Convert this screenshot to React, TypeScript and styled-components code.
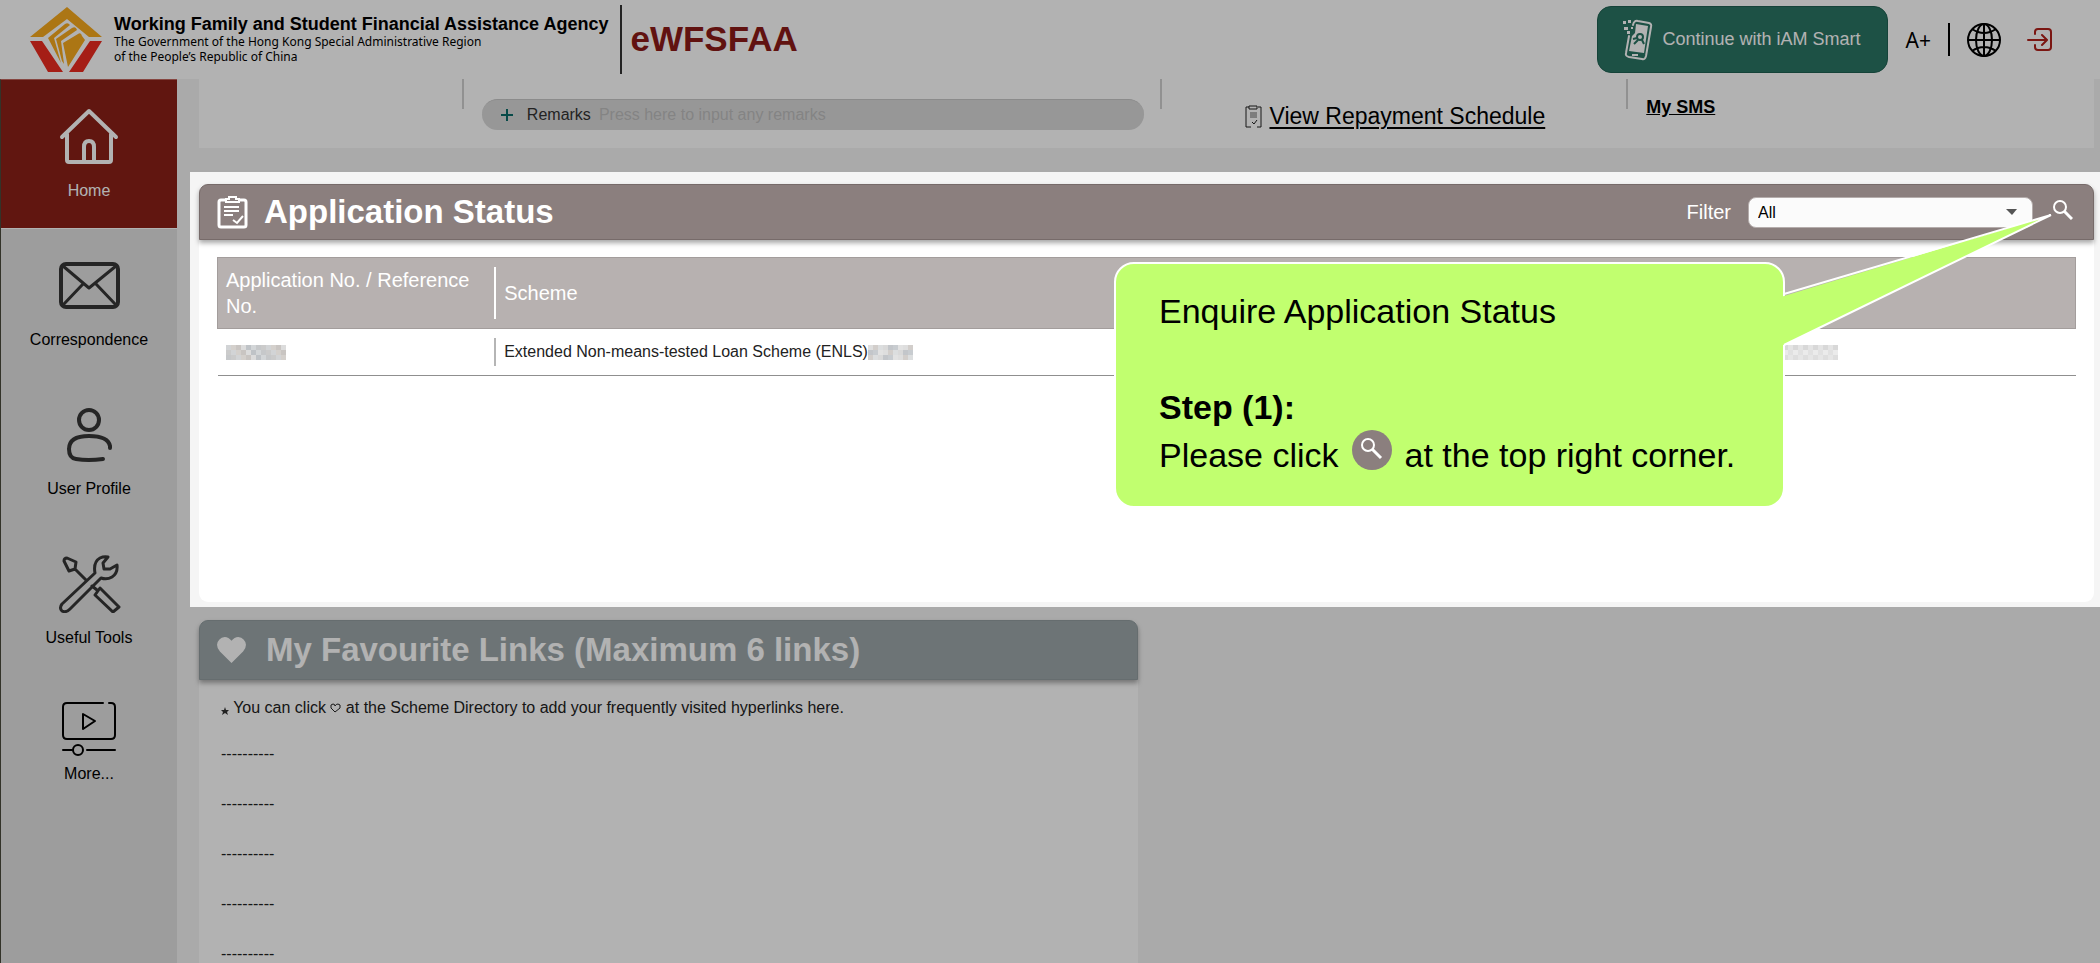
import React from "react";
import styled, { createGlobalStyle, css } from "styled-components";

const GlobalStyle = createGlobalStyle`
  *, *::before, *::after { box-sizing: border-box; }
  body { margin: 0; background: #f4f4f4; font-family: "Liberation Sans", Arial, sans-serif; color: #000; }
  h1, h2, p, ul { margin: 0; padding: 0; }
  ul { list-style: none; }
  button, select, input { font-family: inherit; }
  a { color: inherit; }
`;

/* ---------- shell ---------- */

const Shell = styled.div`
  height: 100vh;
  display: flex;
  flex-direction: column;
  overflow: hidden;
`;

const TopBar = styled.header`
  flex: none;
  height: 79px;
  display: flex;
  align-items: center;
  justify-content: space-between;
  padding: 0 48px 0 30px;
  background: #fff;
`;

const Brand = styled.div`
  display: flex;
  align-items: center;
`;

const Emblem = styled.svg`
  width: 72px;
  height: 66px;
  margin-right: 12px;
`;

const AgencyText = styled.div`
  display: flex;
  flex-direction: column;
  padding-bottom: 2px;
`;

const AgencyName = styled.strong`
  font-size: 18px;
  line-height: 20px;
`;

const AgencyLine = styled.span`
  font-family: "Noto Sans", sans-serif;
  font-size: 12px;
  line-height: 15px;
`;

const SystemName = styled.h1`
  display: flex;
  align-items: center;
  height: 69px;
  margin-left: 12px;
  padding: 0 0 2px 8px;
  border-left: 2px solid #333;
  font-size: 35px;
  color: #8b1a17;
`;

const Tools = styled.div`
  display: flex;
  align-items: center;
`;

const SmartButton = styled.button`
  display: flex;
  align-items: center;
  gap: 9px;
  height: 67px;
  padding: 0 26px 0 25px;
  border: 1px solid #1f6152;
  border-radius: 14px;
  background: #2a7463;
  color: #fff;
  font-size: 18px;
`;

const PlainButton = styled.button`
  display: flex;
  padding: 0;
  border: 0;
  background: none;
  color: inherit;
`;

const SizeButton = styled(PlainButton)`
  margin-left: 18px;
  font-family: "Noto Sans", sans-serif;
  font-size: 21px;
`;

const ToolRule = styled.span`
  width: 2px;
  height: 33px;
  margin: 0 17px;
  background: #000;
`;

const ExitButton = styled(PlainButton)`
  margin-left: 26px;
  color: #b0201a;
`;

const Body = styled.div`
  flex: 1;
  min-height: 0;
  display: flex;
`;

/* ---------- side navigation ---------- */

const Sidebar = styled.nav`
  flex: none;
  width: 177px;
  border-left: 1px solid #4a4a3c;
  border-top: 1px solid #c0655d;
  background: #e1e1e1;
`;

const NavLink = styled.a<{ $active?: boolean; $compact?: boolean }>`
  display: flex;
  flex-direction: column;
  align-items: center;
  gap: ${(p) => (p.$compact ? 5 : 15)}px;
  height: 149px;
  padding-top: ${(p) => (p.$compact ? 23 : 26)}px;
  font-size: 16px;
  line-height: 20px;
  text-decoration: none;
  color: #000;
  ${(p) =>
    p.$active &&
    css`
      background: #8b2018;
      border-bottom: 1px solid #fff;
      color: #fff;
    `}
`;

const NavIcon = styled.svg`
  width: 64px;
  height: 60px;
  fill: none;
  stroke: #363636;
  stroke-width: 4;
  stroke-linecap: round;
  stroke-linejoin: round;
`;

/* ---------- content ---------- */

const Content = styled.main`
  flex: 1;
  min-width: 0;
`;

const Summary = styled.section`
  display: grid;
  grid-template-columns: 265fr 699fr 466fr 466fr;
  height: 69px;
  margin: 0 6px 0 22px;
  background: #fff;
`;

const SummaryCell = styled.div`
  display: flex;
  align-items: flex-start;
  &:not(:last-child) {
    background: linear-gradient(#d0d0d0, #d0d0d0) right top / 2px 30px no-repeat;
  }
`;

const RemarksField = styled.label`
  flex: 1;
  display: flex;
  align-items: center;
  height: 31px;
  margin: 20px 18px 0;
  padding-left: 17px;
  border-top: 1px solid #c8c8c8;
  border-radius: 16px;
  background: #d9d9d9;
  font-size: 16px;
  color: #333;
`;

const RemarksIcon = styled.svg`
  width: 16px;
  height: 16px;
  margin-right: 12px;
`;

const RemarksInput = styled.input`
  flex: 1;
  margin-left: 8px;
  padding: 0;
  border: 0;
  outline: 0;
  background: none;
  font-size: 16px;
  &::placeholder {
    color: #bdbdbd;
    opacity: 1;
  }
`;

const RepaymentLink = styled.a`
  display: flex;
  align-items: center;
  gap: 7px;
  margin: 23px auto 0;
  font-size: 23px;
  line-height: 28px;
  text-decoration: none;
  span { text-decoration: underline; text-decoration-thickness: 2px; text-underline-offset: 3px; }
`;

const SmsLink = styled.a`
  margin: 17px 0 0 18px;
  font-size: 18px;
  font-weight: bold;
  line-height: 22px;
`;

/* The highlighted step stays bright while its spread shadow dims the rest of the page. */
const Spotlight = styled.div`
  position: relative;
  z-index: 2;
  margin: 24px 0 0 13px;
  padding: 12px 6px 5px 9px;
  background: #f5f5f5;
  box-shadow: 0 0 0 4000px rgba(0, 0, 0, 0.3);
`;

const Card = styled.section`
  border-radius: 9px;
  background: #fff;
`;

const StatusCard = styled(Card)`
  min-height: 418px;
`;

const CardHeader = styled.div<{ $tone: "mauve" | "slate" }>`
  display: flex;
  align-items: center;
  gap: ${(p) => (p.$tone === "mauve" ? 16 : 20)}px;
  height: ${(p) => (p.$tone === "mauve" ? 56 : 60)}px;
  padding: 0 20px 0 17px;
  border: 1px solid ${(p) => (p.$tone === "mauve" ? "#776b6a" : "#929da0")};
  border-radius: 9px 9px 0 0;
  background: ${(p) => (p.$tone === "mauve" ? "#8b7f7e" : "#9ca7aa")};
  box-shadow: 0 3px 5px rgba(0, 0, 0, 0.35);
  color: #fff;
`;

const CardTitle = styled.h2`
  font-size: 33px;
  line-height: 40px;
`;

const Filter = styled.div`
  display: flex;
  align-items: center;
  margin-left: auto;
`;

const FilterLabel = styled.label`
  font-size: 20px;
`;

const SelectBox = styled.div`
  display: flex;
  align-items: center;
  position: relative;
  width: 285px;
  margin: 0 20px 0 17px;
`;

const FilterSelect = styled.select`
  appearance: none;
  width: 100%;
  height: 31px;
  padding: 0 9px;
  border: 1px solid #b5adac;
  border-radius: 8px;
  background: #fbfbfb;
  font-size: 16px;
  color: #000;
`;

const Caret = styled.svg`
  position: absolute;
  right: 16px;
  width: 11px;
  height: 6px;
  pointer-events: none;
`;

const SearchButton = styled(PlainButton)`
  padding-bottom: 4px;
`;

const StatusTable = styled.table`
  width: calc(100% - 36px);
  margin: 17px 18px 0;
  table-layout: fixed;
  border-collapse: collapse;
  text-align: left;
  col:first-child { width: 15%; }
  col:last-child { width: 17%; }
  th, td { padding: 9px 0; font-weight: normal; }
  thead { background: #b7b1b0; color: #fff; font-size: 20px; line-height: 26px; border: 1px solid #a39d9c; }
  tbody { font-size: 16px; line-height: 28px; color: #222; border-bottom: 1px solid #8f8f8f; }
`;

const Cell = styled.div<{ $rule?: string }>`
  display: flex;
  align-items: center;
  padding: 0 8px;
  ${(p) => p.$rule && css`border-right: 2px solid ${p.$rule};`}
`;

const Mosaic = styled.svg`
  height: 15px;
  shape-rendering: crispEdges;
`;

/* ---------- callout ---------- */

const Callout = styled.aside`
  position: absolute;
  top: 90px;
  right: 315px;
  width: 671px;
  height: 246px;
  padding: 23px 43px;
  border: 2px solid #fff;
  border-radius: 20px;
  background: #c1ff6f;
  font-size: 34px;
  line-height: 48px;
`;

const CalloutTail = styled.svg`
  position: absolute;
  top: -52px;
  left: 665px;
  width: 272px;
  height: 136px;
`;

const StepTitle = styled.p`
  margin-top: 48px;
  font-weight: bold;
`;

const StepText = styled.p`
  display: flex;
  align-items: center;
  height: 48px;
  white-space: nowrap;
`;

const StepIcon = styled.svg`
  width: 40px;
  height: 40px;
  margin: 0 13px 10px 13px;
`;

/* ---------- favourites ---------- */

const Lower = styled.div`
  display: grid;
  grid-template-columns: 1fr 1fr;
  gap: 17px;
  margin: 13px 6px 0 22px;
`;

const FavouriteNote = styled.p`
  display: flex;
  align-items: center;
  padding: 17px 22px 0;
  font-size: 16px;
  line-height: 22px;
  color: #222;
  white-space: pre;
`;

const FavouriteList = styled.ul`
  padding: 12px 22px 0;
  font-size: 16px;
  color: #222;
`;

const FavouriteItem = styled.li`
  height: 50px;
  padding-top: 14px;
  line-height: 18px;
`;

/* ---------- drawings ---------- */

const LogoMark = () => (
  <Emblem viewBox="0 0 72 66" aria-hidden="true">
    <path d="M37 0 L72 30 H59 L37 12 L13 30 H0 Z" fill="#f6a91e" />
    <path d="M0 34 H12 L33 65 H18 Z M72 34 H60 L39 65 H53 Z" fill="#ec2c20" />
    <path d="M18 31 L35 17 Q38 15 40 18 L24 31 L31 56 Z" fill="#f6a91e" />
    <path d="M26 32 L42 21 Q46 19 47 23 L31 34 L34 57 L32 54 Z" fill="#f6a91e" />
    <path d="M33 36 L48 27 Q51 25 52 29 L55 33 L38 60 Z" fill="#f6a91e" />
  </Emblem>
);

const Phone = () => (
  <svg width="30" height="42" viewBox="0 0 30 42" aria-hidden="true">
    <g fill="none" stroke="#fff" strokeWidth="2" strokeLinejoin="round" strokeLinecap="round">
      <path d="M10 6 Q11 1 15 2 L26 4 Q29 5 28 8 L23 37 Q22 41 19 40 L6 38 Q2 37 3 34 L6 17" />
    </g>
    <path d="M13 5 L25 7 L21 34 L6 32 L9 17 L12 14 Z" fill="#fff" />
    <g fill="#fff">
      <rect x="0" y="2" width="3" height="3" />
      <rect x="5" y="1" width="3" height="3" />
      <rect x="1" y="8" width="4" height="3" />
      <rect x="4" y="12" width="3" height="3" />
      <rect x="8" y="8" width="2" height="2" />
      <rect x="9" y="35" width="6" height="2" />
    </g>
    <g fill="none" stroke="#2a7463" strokeWidth="2">
      <circle cx="17" cy="18" r="3" />
      <path d="M10 20 L14 19 M11 25 L15 21 M19 21 L21 25" />
    </g>
  </svg>
);

const Globe = () => (
  <svg width="34" height="34" viewBox="0 0 34 34" fill="none" stroke="#000" strokeWidth="2" aria-hidden="true">
    <circle cx="17" cy="17" r="16" />
    <ellipse cx="17" cy="17" rx="8" ry="16" />
    <path d="M17 1 V33 M1 17 H33 M5 6 Q17 14 29 6 M5 28 Q17 20 29 28" />
  </svg>
);

const Exit = () => (
  <svg width="25" height="23" viewBox="0 0 25 23" fill="none" stroke="currentColor" strokeWidth="2" strokeLinecap="round" strokeLinejoin="round" aria-hidden="true">
    <path d="M8 6 V4 Q8 1 11 1 H21 Q24 1 24 4 V19 Q24 22 21 22 H11 Q8 22 8 19 V17 M1 12 H19 M15 7 L20 12 L15 17" />
  </svg>
);

const Clipboard = () => (
  <svg width="31" height="34" viewBox="0 0 31 34" fill="none" stroke="#fff" strokeWidth="3" aria-hidden="true">
    <path d="M8 5 H4 Q2 5 2 7 V30 Q2 32 4 32 H27 Q29 32 29 30 V7 Q29 5 27 5 H23" />
    <path d="M9 4 H12 V2 H19 V4 H22 V7 H9 Z M7 12 H22 M7 16 H22 M7 20 H16 M16 25 L20 28 L26 21" strokeWidth="2" />
  </svg>
);

const SmallClipboard = () => (
  <svg width="17" height="23" viewBox="0 0 17 23" fill="none" stroke="#222" aria-hidden="true">
    <path d="M4 2 H1 V22 H6 M12 22 H16 V2 H13 M4 1 H12 V4 H4 Z M7 17 L9 19 L12 15" />
    <path d="M5 8 H12 M5 10 H12 M5 12 H12" stroke="#666" />
  </svg>
);

const Magnifier = () => (
  <svg width="20" height="20" viewBox="0 0 20 20" fill="none" stroke="#fff" strokeWidth="2" aria-hidden="true">
    <circle cx="7" cy="7" r="6" />
    <path d="M11 11 L19 19" strokeWidth="3" />
  </svg>
);

const mosaicShades: Record<string, string[]> = {
  a: ["#d2d4d6", "#dcdcdc", "#c6c8ca", "#d4d0cc", "#bfc3c7", "#cbcbcb", "#c9c5c2", "#d3d6d8"],
  b: ["#dedede", "#c8ccd0", "#d9d9d9", "#d2cecb", "#e2e2e2", "#c3c6ca", "#dcdedf"],
  c: ["#e4e4e4", "#dedede", "#ebebeb", "#d8d8d8", "#e6e6e6", "#e1e1e1"],
};

const Redacted = ({ tone, columns }: { tone: "a" | "b" | "c"; columns: number }) => {
  const shades = mosaicShades[tone];
  const cells = Array.from({ length: columns * 3 }, (_, i) => i);
  return (
    <Mosaic width={columns * 5} viewBox={`0 0 ${columns * 5} 15`} aria-label="Hidden value">
      {cells.map((i) => {
        const x = i % columns;
        const y = Math.floor(i / columns);
        return <rect key={i} x={x * 5} y={y * 5} width="5" height="5" fill={shades[(x * 3 + y * 5) % shades.length]} />;
      })}
    </Mosaic>
  );
};

const navItems = [
  {
    label: "Home",
    active: true,
    icon: (
      <g stroke="#fff">
        <path d="M5 31 L32 5 L59 31 M10 28 V54 Q10 56 12 56 H52 Q54 56 54 54 V28 M27 56 V41 Q27 35 32 35 Q37 35 37 41 V56" />
      </g>
    ),
  },
  {
    label: "Correspondence",
    icon: (
      <>
        <rect x="4" y="9" width="57" height="43" rx="5" />
        <path d="M6 11 L32 33 L59 11 M6 50 L26 29 M59 50 L39 29" strokeWidth="3" />
      </>
    ),
  },
  {
    label: "User Profile",
    icon: (
      <>
        <circle cx="32" cy="16" r="10" />
        <path d="M53 44 V42 Q51 32 32 32 Q12 32 12 45 Q12 54 19 55 Q31 57 46 55" />
      </>
    ),
  },
  {
    label: "Useful Tools",
    icon: (
      <g strokeWidth="3">
        <path d="M5 58 Q2 55 5 51 L38 20 Q36 9 43 5 Q47 3 51 4 L46 10 L47 16 L53 16 L60 12 Q61 20 55 24 Q50 27 44 25 L13 56 Q9 60 5 58 Z" />
        <path d="M29 27 L18 16 L12 18 L7 8 Q7 5 10 5 L19 9 L18 16 M35 33 L40 37 M38 42 L43 35 L62 54 L56 59 Z" />
      </g>
    ),
  },
  {
    label: "More...",
    compact: true,
    icon: (
      <g stroke="#000" strokeWidth="2">
        <path d="M46 4 H10 Q6 4 6 8 V36 Q6 40 10 40 H54 Q58 40 58 36 V8 Q58 4 54 4 H52 M26 15 V30 L38 22 Z M6 51 H15 M30 51 H58" />
        <circle cx="21" cy="51" r="5" />
      </g>
    ),
  },
];

export default function App() {
  return (
    <>
      <GlobalStyle />
      <Shell>
        <TopBar>
          <Brand>
            <LogoMark />
            <AgencyText>
              <AgencyName>Working Family and Student Financial Assistance Agency</AgencyName>
              <AgencyLine>The Government of the Hong Kong Special Administrative Region</AgencyLine>
              <AgencyLine>of the People’s Republic of China</AgencyLine>
            </AgencyText>
            <SystemName>eWFSFAA</SystemName>
          </Brand>
          <Tools>
            <SmartButton type="button">
              <Phone />
              Continue with iAM Smart
            </SmartButton>
            <SizeButton type="button">A+</SizeButton>
            <ToolRule />
            <PlainButton type="button" aria-label="Language">
              <Globe />
            </PlainButton>
            <ExitButton type="button" aria-label="Log out">
              <Exit />
            </ExitButton>
          </Tools>
        </TopBar>
        <Body>
          <Sidebar>
            {navItems.map((item) => (
              <NavLink key={item.label} href="#" $active={item.active} $compact={item.compact}>
                <NavIcon viewBox="0 0 64 60" aria-hidden="true">{item.icon}</NavIcon>
                {item.label}
              </NavLink>
            ))}
          </Sidebar>
          <Content>
            <Summary>
              <SummaryCell />
              <SummaryCell>
                <RemarksField>
                  <RemarksIcon viewBox="0 0 16 16" stroke="#0b6b68" strokeWidth="2" aria-hidden="true">
                    <path d="M8 2 V14 M2 8 H14" />
                  </RemarksIcon>
                  Remarks
                  <RemarksInput placeholder="Press here to input any remarks" />
                </RemarksField>
              </SummaryCell>
              <SummaryCell>
                <RepaymentLink href="#">
                  <SmallClipboard />
                  <span>View Repayment Schedule</span>
                </RepaymentLink>
              </SummaryCell>
              <SummaryCell>
                <SmsLink href="#">My SMS</SmsLink>
              </SummaryCell>
            </Summary>

            <Spotlight>
              <StatusCard>
                <CardHeader $tone="mauve">
                  <Clipboard />
                  <CardTitle>Application Status</CardTitle>
                  <Filter>
                    <FilterLabel htmlFor="status-filter">Filter</FilterLabel>
                    <SelectBox>
                      <FilterSelect id="status-filter" defaultValue="All">
                        <option>All</option>
                      </FilterSelect>
                      <Caret viewBox="0 0 11 6" aria-hidden="true">
                        <path d="M0 0 H11 L6 6 Z" fill="#555" />
                      </Caret>
                    </SelectBox>
                    <SearchButton type="button" aria-label="Search">
                      <Magnifier />
                    </SearchButton>
                  </Filter>
                </CardHeader>
                <StatusTable>
                  <colgroup>
                    <col />
                    <col />
                    <col />
                  </colgroup>
                  <thead>
                    <tr>
                      <th scope="col">
                        <Cell $rule="#fff">Application No. / Reference No.</Cell>
                      </th>
                      <th scope="col">
                        <Cell>Scheme</Cell>
                      </th>
                      <th scope="col" aria-label="Date" />
                    </tr>
                  </thead>
                  <tbody>
                    <tr>
                      <td>
                        <Cell $rule="#b5b5b5">
                          <Redacted tone="a" columns={12} />
                          &nbsp;
                        </Cell>
                      </td>
                      <td>
                        <Cell>
                          Extended Non-means-tested Loan Scheme (ENLS)
                          <Redacted tone="b" columns={9} />
                        </Cell>
                      </td>
                      <td>
                        <Cell>
                          <Redacted tone="c" columns={14} />
                        </Cell>
                      </td>
                    </tr>
                  </tbody>
                </StatusTable>
              </StatusCard>
              <Callout>
                <CalloutTail viewBox="0 0 272 136" aria-hidden="true">
                  <path d="M0 85 L3 84 L270 3 L3 133 L0 133 Z" fill="#c1ff6f" />
                  <path d="M3 82 L270 3 L3 133" fill="none" stroke="#fff" strokeWidth="2" />
                </CalloutTail>
                <p>Enquire Application Status</p>
                <StepTitle>Step (1):</StepTitle>
                <StepText>
                  Please click
                  <StepIcon viewBox="0 0 40 40" aria-hidden="true">
                    <circle cx="20" cy="20" r="20" fill="#8b7f7e" />
                    <circle cx="16" cy="15" r="6" fill="none" stroke="#fff" strokeWidth="2" />
                    <path d="M20 19 L29 28" stroke="#fff" strokeWidth="3" />
                  </StepIcon>
                  at the top right corner.
                </StepText>
              </Callout>
            </Spotlight>

            <Lower>
              <Card>
                <CardHeader $tone="slate">
                  <svg width="29" height="27" viewBox="0 0 30 28" fill="#fff" aria-hidden="true">
                    <path d="M15 27 L3 15 Q0 12 0 8 Q1 1 8 0 Q12 0 15 4 Q18 0 22 0 Q29 1 30 8 Q30 12 27 15 Z" />
                  </svg>
                  <CardTitle>My Favourite Links (Maximum 6 links)</CardTitle>
                </CardHeader>
                <FavouriteNote>
                  <svg width="8" height="14" viewBox="0 0 8 14" fill="#333" aria-hidden="true">
                    <path d="M4 6 L5 9 H8 L6 11 L7 14 L4 12 L1 14 L2 11 L0 9 H3 Z" />
                  </svg>
                  {" You can click "}
                  <svg width="11" height="10" viewBox="0 0 11 10" fill="none" stroke="#222" aria-hidden="true">
                    <path d="M5 9 L1 5 Q0 1 3 1 Q5 1 5 3 Q6 1 8 1 Q11 1 10 5 Z" />
                  </svg>
                  {" at the Scheme Directory to add your frequently visited hyperlinks here."}
                </FavouriteNote>
                <FavouriteList>
                  {[1, 2, 3, 4, 5].map((slot) => (
                    <FavouriteItem key={slot}>----------</FavouriteItem>
                  ))}
                </FavouriteList>
              </Card>
            </Lower>
          </Content>
        </Body>
      </Shell>
    </>
  );
}
